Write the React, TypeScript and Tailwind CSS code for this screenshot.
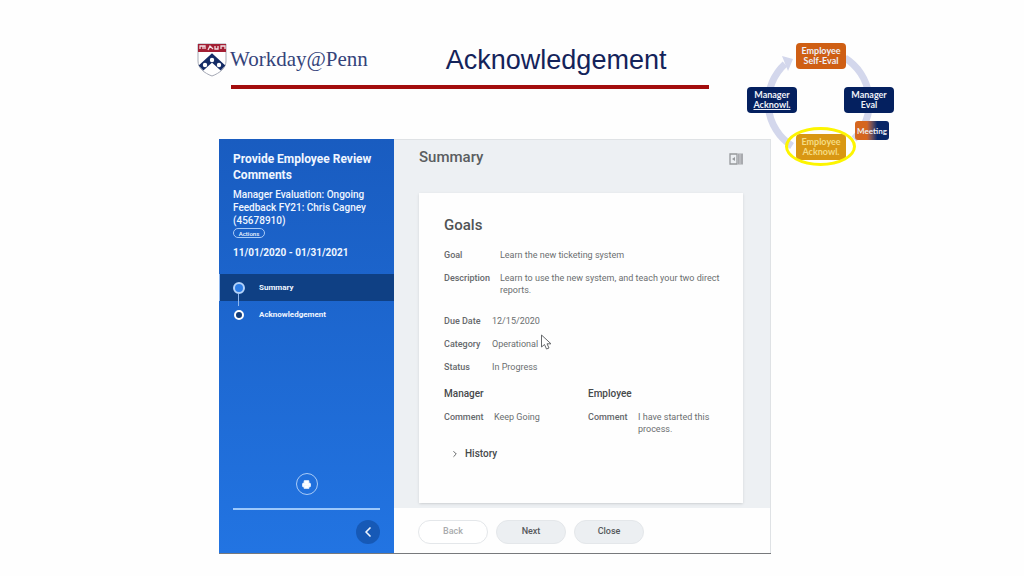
import type React from "react"
import { ChevronLeft, ChevronRight, Printer } from "lucide-react"
import clsx from "clsx"

type FieldProps = {
  label: string
  children: React.ReactNode
  className: string
}

function Field({ label, children, className }: FieldProps) {
  return (
    <div className={clsx("grid", className)}>
      <dt className="font-medium text-[#66696c]">{label}</dt>
      <dd className="text-[#6b6e70]">{children}</dd>
    </div>
  )
}

function PennShield() {
  return (
    <svg viewBox="0 0 30 34" className="h-[34px] w-[30px] shrink-0" aria-hidden="true">
      <path d="M1 1h28v17c0 7-6 12-14 15C7 30 1 25 1 18z" fill="#fff" stroke="#a5a9b5" />
      <path d="M1 1h28v8H1z" fill="#a31f34" />
      <path d="M3 6V3h5v3M6 3v3M11 7l2-4 3 3M18 3v3h3V3M24 6V3h4v3" fill="none" stroke="#f3dfe2" strokeWidth="1.3" />
      <path d="M4 25 15 15l11 10" fill="none" stroke="#152c66" strokeWidth="7" />
      <circle cx="15" cy="17" r="2.2" fill="#fff" />
      <circle cx="8" cy="22" r="2.2" fill="#fff" />
      <circle cx="22" cy="22" r="2.2" fill="#fff" />
    </svg>
  )
}

function CycleNode({ className, children }: { className: string; children: React.ReactNode }) {
  return (
    <div
      className={clsx(
        "absolute flex h-[26px] w-[50px] items-center justify-center rounded-[4px] text-center text-[9px] leading-[10px]",
        className,
      )}
    >
      <span>{children}</span>
    </div>
  )
}

function ReviewCycle() {
  return (
    <div className="absolute right-0 top-0 h-[126px] w-[148px] font-['Lato',sans-serif] font-bold text-[#eef0f7]">
      <svg viewBox="0 0 148 126" className="absolute inset-0 h-full w-full" aria-hidden="true">
        <g fill="none" stroke="#d3d7ec" strokeWidth="7">
          <path d="M98 16A52 52 0 0 1 107 97" />
          <path d="M45 104A52 52 0 0 1 38 22" />
        </g>
        <path d="M35 14 46 17 41 29z" fill="#d3d7ec" />
      </svg>
      <CycleNode className="left-[49px] top-px bg-[#cf5f14]">
        Employee
        <br />
        Self-Eval
      </CycleNode>
      <CycleNode className="left-[97px] top-[45px] bg-[#04205f]">
        Manager
        <br />
        Eval
      </CycleNode>
      <CycleNode className="left-0 top-[45px] bg-[#04205f]">
        Manager
        <br />
        <span className="underline">Acknowl.</span>
      </CycleNode>
      <div className="absolute left-[108px] top-[79px] flex h-[19px] w-[34px] items-center justify-center rounded-[3px] bg-linear-to-r from-[#d5661f] from-35% to-[#0a2767] to-65% text-[8px]">
        Meeting
      </div>
      <CycleNode className="left-[49px] top-[92px] bg-[#d99713] text-[#f5dc83]">
        Employee
        <br />
        Acknowl.
      </CycleNode>
      <div className="absolute left-[38px] top-[85px] h-[39px] w-[71px] rounded-[50%] border-[3px] border-[#fdf500]" />
    </div>
  )
}

function Step({ label, active }: { label: string; active?: boolean }) {
  return (
    <li
      className={clsx(
        "relative flex h-[27px] items-center gap-[14px]",
        active ? "border-l border-[#8fb7ee] bg-[#0f4084] pl-[13px]" : "pl-[14px]",
      )}
    >
      <span className="flex w-3 justify-center">
        <span
          className={clsx(
            "rounded-full border-2",
            active ? "size-3 border-[#b4d3fa] bg-[#2d7de6]" : "size-[10px] border-white bg-[#123c78]",
          )}
        />
      </span>
      {active && <span className="absolute left-[18px] top-5 h-3 w-px bg-[#8fb7ee]" />}
      <a href="#" aria-current={active ? "step" : undefined} className="text-[8px] font-bold">
        {label}
      </a>
    </li>
  )
}

function Sidebar() {
  return (
    <aside className="flex w-[175px] shrink-0 flex-col bg-linear-to-b from-[#195cc0] to-[#2274e2] text-[#f0f6ff]">
      <div className="px-[14px] pt-3">
        <h2 className="text-[12px] font-bold leading-4">Provide Employee Review Comments</h2>
        <p className="mt-[5px] text-[10px] font-medium leading-[13px]">
          Manager Evaluation: Ongoing Feedback FY21: Chris Cagney (45678910)
        </p>
        <button
          type="button"
          className="mt-px flex h-[10px] w-8 items-center justify-center rounded-full border border-[#a9cbf7] text-[6px] font-medium"
        >
          Actions
        </button>
        <p className="mt-2 text-[10px] font-bold leading-[14px]">11/01/2020 - 01/31/2021</p>
      </div>
      <ol className="mt-[14px]">
        <Step label="Summary" active />
        <Step label="Acknowledgement" />
      </ol>
      <div className="mt-auto px-[14px] pb-[9px]">
        <button
          type="button"
          aria-label="Print"
          className="mx-auto flex size-[22px] items-center justify-center rounded-full border border-[#a9cbf7]"
        >
          <Printer className="size-[9px] fill-white" strokeWidth={3} />
        </button>
        <hr className="mb-[10px] mt-[13px] border-t-2 border-[#9cc8fb]" />
        <button
          type="button"
          aria-label="Collapse"
          className="ml-auto flex size-6 items-center justify-center rounded-full bg-[#1659b6]"
        >
          <ChevronLeft className="size-4" strokeWidth={2.5} />
        </button>
      </div>
    </aside>
  )
}

function GoalsCard() {
  return (
    <section className="ml-[25px] mr-[27px] mt-[26px] bg-[#fefefe] pb-[43px] pl-[25px] pr-5 pt-[22px] text-[9px] leading-3 shadow-sm">
      <h3 className="text-[15px] font-medium leading-5 text-[#505355]">Goals</h3>
      <dl className="mt-[14px] flex flex-col gap-[11px]">
        <Field label="Goal" className="grid-cols-[56px_1fr]">
          Learn the new ticketing system
        </Field>
        <Field label="Description" className="grid-cols-[56px_1fr]">
          Learn to use the new system, and teach your two direct reports.
        </Field>
      </dl>
      <dl className="mt-[19px] flex flex-col gap-[11px]">
        <Field label="Due Date" className="grid-cols-[48px_1fr]">
          12/15/2020
        </Field>
        <Field label="Category" className="grid-cols-[48px_1fr]">
          <span className="relative">
            Operational
            {/* mouse pointer */}
            <svg viewBox="0 0 12 17" className="absolute -right-[14px] -top-[5px] h-[17px] w-3" aria-hidden="true">
              <path d="M1.500 1v12l3-2.500 2 4.500 2.500-1-2-4.200H11z" fill="#fff" stroke="#66696c" />
            </svg>
          </span>
        </Field>
        <Field label="Status" className="grid-cols-[48px_1fr]">
          In Progress
        </Field>
      </dl>
      <div className="mt-[15px] grid grid-cols-[144px_1fr]">
        <div>
          <h4 className="text-[10px] font-medium text-[#46494b]">Manager</h4>
          <dl className="mt-[11px]">
            <Field label="Comment" className="grid-cols-[50px_1fr]">
              Keep Going
            </Field>
          </dl>
        </div>
        <div>
          <h4 className="text-[10px] font-medium text-[#46494b]">Employee</h4>
          <dl className="mt-[11px]">
            <Field label="Comment" className="grid-cols-[50px_1fr]">
              I have started this process.
            </Field>
          </dl>
        </div>
      </div>
      <button type="button" className="ml-[5px] mt-[13px] flex items-center gap-1 text-[10px] font-medium text-[#46494b]">
        <ChevronRight className="size-3 p-px" />
        History
      </button>
    </section>
  )
}

function ActionButton({ label, disabled }: { label: string; disabled?: boolean }) {
  return (
    <button
      type="button"
      disabled={disabled}
      className={clsx(
        "h-6 w-[70px] rounded-full border border-[#e4e7ea] text-[9px] font-medium",
        disabled ? "bg-white text-[#a9abad]" : "bg-[#eceff2] text-[#55585b]",
      )}
    >
      {label}
    </button>
  )
}

export default function App() {
  return (
    <div className="min-h-screen bg-[#fefefe] pb-[22px] pl-[197px] pr-[129px] pt-[42px] font-['Roboto',sans-serif]">
      <header className="relative h-[97px]">
        <div className="flex h-9 items-center">
          <PennShield />
          <span className="ml-[3px] font-['Liberation_Serif',serif] text-[21px] text-[#34437a]">Workday@Penn</span>
          <h1 className="ml-[78px] font-['Liberation_Sans',sans-serif] text-[27px] text-[#14235a]">Acknowledgement</h1>
        </div>
        <hr className="ml-[34px] mr-[186px] mt-[7px] border-t-4 border-[#a30d0d]" />
        <ReviewCycle />
      </header>
      <div className="ml-[22px] mr-[124px] flex border-b border-[#77797c]">
        <Sidebar />
        <main className="flex min-w-0 flex-1 flex-col border-r border-t border-[#dfe2e5] bg-[#edf0f3]">
          <div className="flex items-center justify-between pl-[25px] pr-[27px] pt-[7px]">
            <h2 className="text-[15px] font-medium leading-5 text-[#5a5d60]">Summary</h2>
            <button type="button" aria-label="Toggle side panel" className="text-[#96999c]">
              <svg viewBox="0 0 14 12" className="mt-1 h-3 w-[14px]" aria-hidden="true">
                <path d="M1 1h7v10H1z" fill="none" stroke="currentColor" strokeWidth="1.300" />
                <path d="M6 4v4L3 6z" fill="currentColor" />
                <path d="M9 .5h5v11H9z" fill="currentColor" opacity=".8" />
                <path d="M11 1v10" stroke="#e0e3e6" strokeWidth=".6" />
              </svg>
            </button>
          </div>
          <GoalsCard />
          <footer className="mt-[5px] flex gap-2 bg-[#fefefe] pb-[9px] pl-6 pt-3">
            <ActionButton label="Back" disabled />
            <ActionButton label="Next" />
            <ActionButton label="Close" />
          </footer>
        </main>
      </div>
    </div>
  )
}
